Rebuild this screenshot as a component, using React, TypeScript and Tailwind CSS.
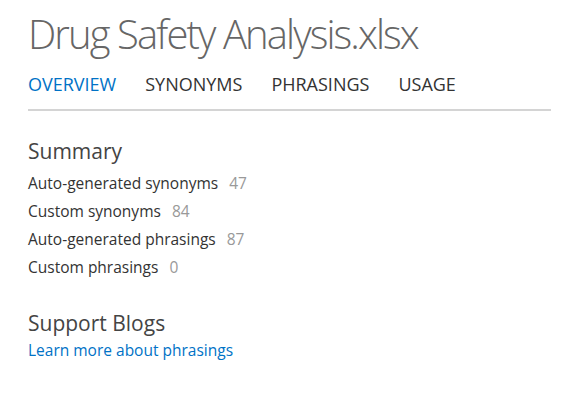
import React from 'react';

const tabs = ['OVERVIEW', 'SYNONYMS', 'PHRASINGS', 'USAGE'];

const summary = [
  { label: 'Auto-generated synonyms', count: 47 },
  { label: 'Custom synonyms', count: 84 },
  { label: 'Auto-generated phrasings', count: 87 },
  { label: 'Custom phrasings', count: 0 },
];

const App: React.FC = () => {
  return (
    <div className="min-h-screen w-[570px] bg-white font-['Open_Sans',sans-serif]">
      <div className="pl-[28px] pr-[19px] pt-[8px]">
        {/* Title */}
        <h1 className="text-[40px] leading-[52px] font-light text-[#666666] tracking-[-1.9px]">
          Drug Safety Analysis.xlsx
        </h1>

        {/* Tabs */}
        <div className="mt-[12px] flex gap-[29px] text-[18px] leading-[24px]">
          {tabs.map((tab, i) => (
            <span key={tab} className={i === 0 ? 'text-[#0072c6]' : 'text-[#333333]'}>
              {tab}
            </span>
          ))}
        </div>
        <div className="mt-[13px] h-[2px] bg-[#d4d4d4]" />

        {/* Summary */}
        <h2 className="mt-[26px] text-[21px] leading-[28px] text-[#444444]">Summary</h2>
        <ul className="mt-[4px]">
          {summary.map((item) => (
            <li key={item.label} className="text-[15.5px] leading-[28px] text-[#333333]">
              {item.label}
              <span className="ml-[11px] text-[#999999]">{item.count}</span>
            </li>
          ))}
        </ul>

        {/* Support Blogs */}
        <h2 className="mt-[28px] text-[21px] leading-[28px] text-[#444444]">Support Blogs</h2>
        <a href="#" className="block text-[15.5px] leading-[24px] mt-[1px] text-[#0072c6]">
          Learn more about phrasings
        </a>
      </div>
    </div>
  );
};

export default App;
